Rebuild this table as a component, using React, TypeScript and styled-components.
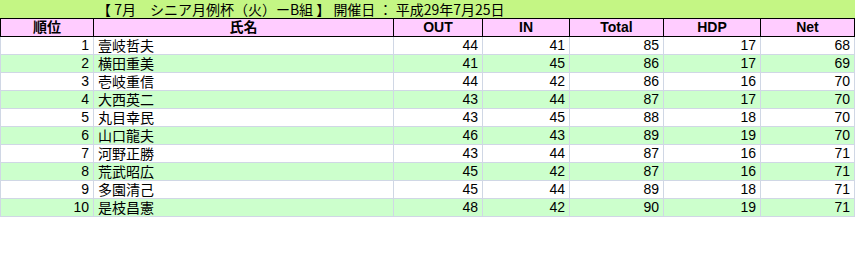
import styled, { createGlobalStyle } from "styled-components";

const GlobalStyle = createGlobalStyle`
  html, body {
    margin: 0;
    padding: 0;
    background: #ffffff;
  }
  body {
    font-family: "Liberation Sans", "Noto Sans CJK JP", sans-serif;
  }
`;

interface Player {
  rank: number;
  name: string;
  out: number;
  inn: number;
  total: number;
  hdp: number;
  net: number;
}

const players: Player[] = [
  { rank: 1, name: "壹岐哲夫", out: 44, inn: 41, total: 85, hdp: 17, net: 68 },
  { rank: 2, name: "横田重美", out: 41, inn: 45, total: 86, hdp: 17, net: 69 },
  { rank: 3, name: "壱岐重信", out: 44, inn: 42, total: 86, hdp: 16, net: 70 },
  { rank: 4, name: "大西英二", out: 43, inn: 44, total: 87, hdp: 17, net: 70 },
  { rank: 5, name: "丸目幸民", out: 43, inn: 45, total: 88, hdp: 18, net: 70 },
  { rank: 6, name: "山口龍夫", out: 46, inn: 43, total: 89, hdp: 19, net: 70 },
  { rank: 7, name: "河野正勝", out: 43, inn: 44, total: 87, hdp: 16, net: 71 },
  { rank: 8, name: "荒武昭広", out: 45, inn: 42, total: 87, hdp: 16, net: 71 },
  { rank: 9, name: "多園清己", out: 45, inn: 44, total: 89, hdp: 18, net: 71 },
  { rank: 10, name: "是枝昌憲", out: 48, inn: 42, total: 90, hdp: 19, net: 71 },
];

// column widths taken from the sheet
const widths = [93, 300, 89, 87, 94, 97, 94];

export default function App() {
  return (
    <>
      <GlobalStyle />
      <Sheet>
        <TitleBar>
          【 7月　シニア月例杯（火）ーB組 】 開催日 ： 平成29年7月25日
        </TitleBar>
        <Table>
          <colgroup>
            {widths.map((w, i) => (
              <col key={i} style={{ width: w }} />
            ))}
          </colgroup>
          <thead>
            <tr>
              <HeadCell>順位</HeadCell>
              <HeadCell>氏名</HeadCell>
              <HeadCell>OUT</HeadCell>
              <HeadCell>IN</HeadCell>
              <HeadCell>Total</HeadCell>
              <HeadCell>HDP</HeadCell>
              <HeadCell>Net</HeadCell>
            </tr>
          </thead>
          <tbody>
            {players.map((p) => (
              <Row key={p.rank} $alt={p.rank % 2 === 0}>
                <NumCell>{p.rank}</NumCell>
                <NameCell>{p.name}</NameCell>
                <NumCell>{p.out}</NumCell>
                <NumCell>{p.inn}</NumCell>
                <NumCell>{p.total}</NumCell>
                <NumCell>{p.hdp}</NumCell>
                <NumCell>{p.net}</NumCell>
              </Row>
            ))}
          </tbody>
        </Table>
      </Sheet>
    </>
  );
}

const Sheet = styled.div`
  width: 855px;
  height: 253px;
  background: #ffffff;
`;

const TitleBar = styled.div`
  height: 18px;
  padding-left: 97px;
  background: #c4f684;
  font-family: "Noto Sans CJK JP", sans-serif;
  font-size: 14px;
  line-height: 18px;
  white-space: nowrap;
  overflow: hidden;
`;

const Table = styled.table`
  width: 854px;
  border-collapse: collapse;
  table-layout: fixed;
  font-size: 14px;
  color: #000000;
`;

const HeadCell = styled.th`
  height: 17px;
  padding: 0;
  line-height: 17px;
  background: #ffccff;
  border: 1px solid #000000;
  font-weight: bold;
  text-align: center;
  font-family: "Liberation Sans", "Noto Sans CJK JP", sans-serif;
  font-size: 14px;
`;

const Row = styled.tr<{ $alt: boolean }>`
  height: 18px;
  background: ${(p) => (p.$alt ? "#ccffcc" : "#ffffff")};
`;

const NumCell = styled.td`
  padding: 0 4px 0 0;
  height: 17px;
  line-height: 17px;
  text-align: right;
  border: 1px solid #d0d7e5;
  border-top: none;
  font-family: "Liberation Sans", "Noto Sans CJK JP", sans-serif;
`;

const NameCell = styled.td`
  padding: 0 0 0 4px;
  height: 17px;
  line-height: 17px;
  text-align: left;
  border: 1px solid #d0d7e5;
  border-top: none;
  font-family: "Noto Sans CJK JP", sans-serif;
`;
